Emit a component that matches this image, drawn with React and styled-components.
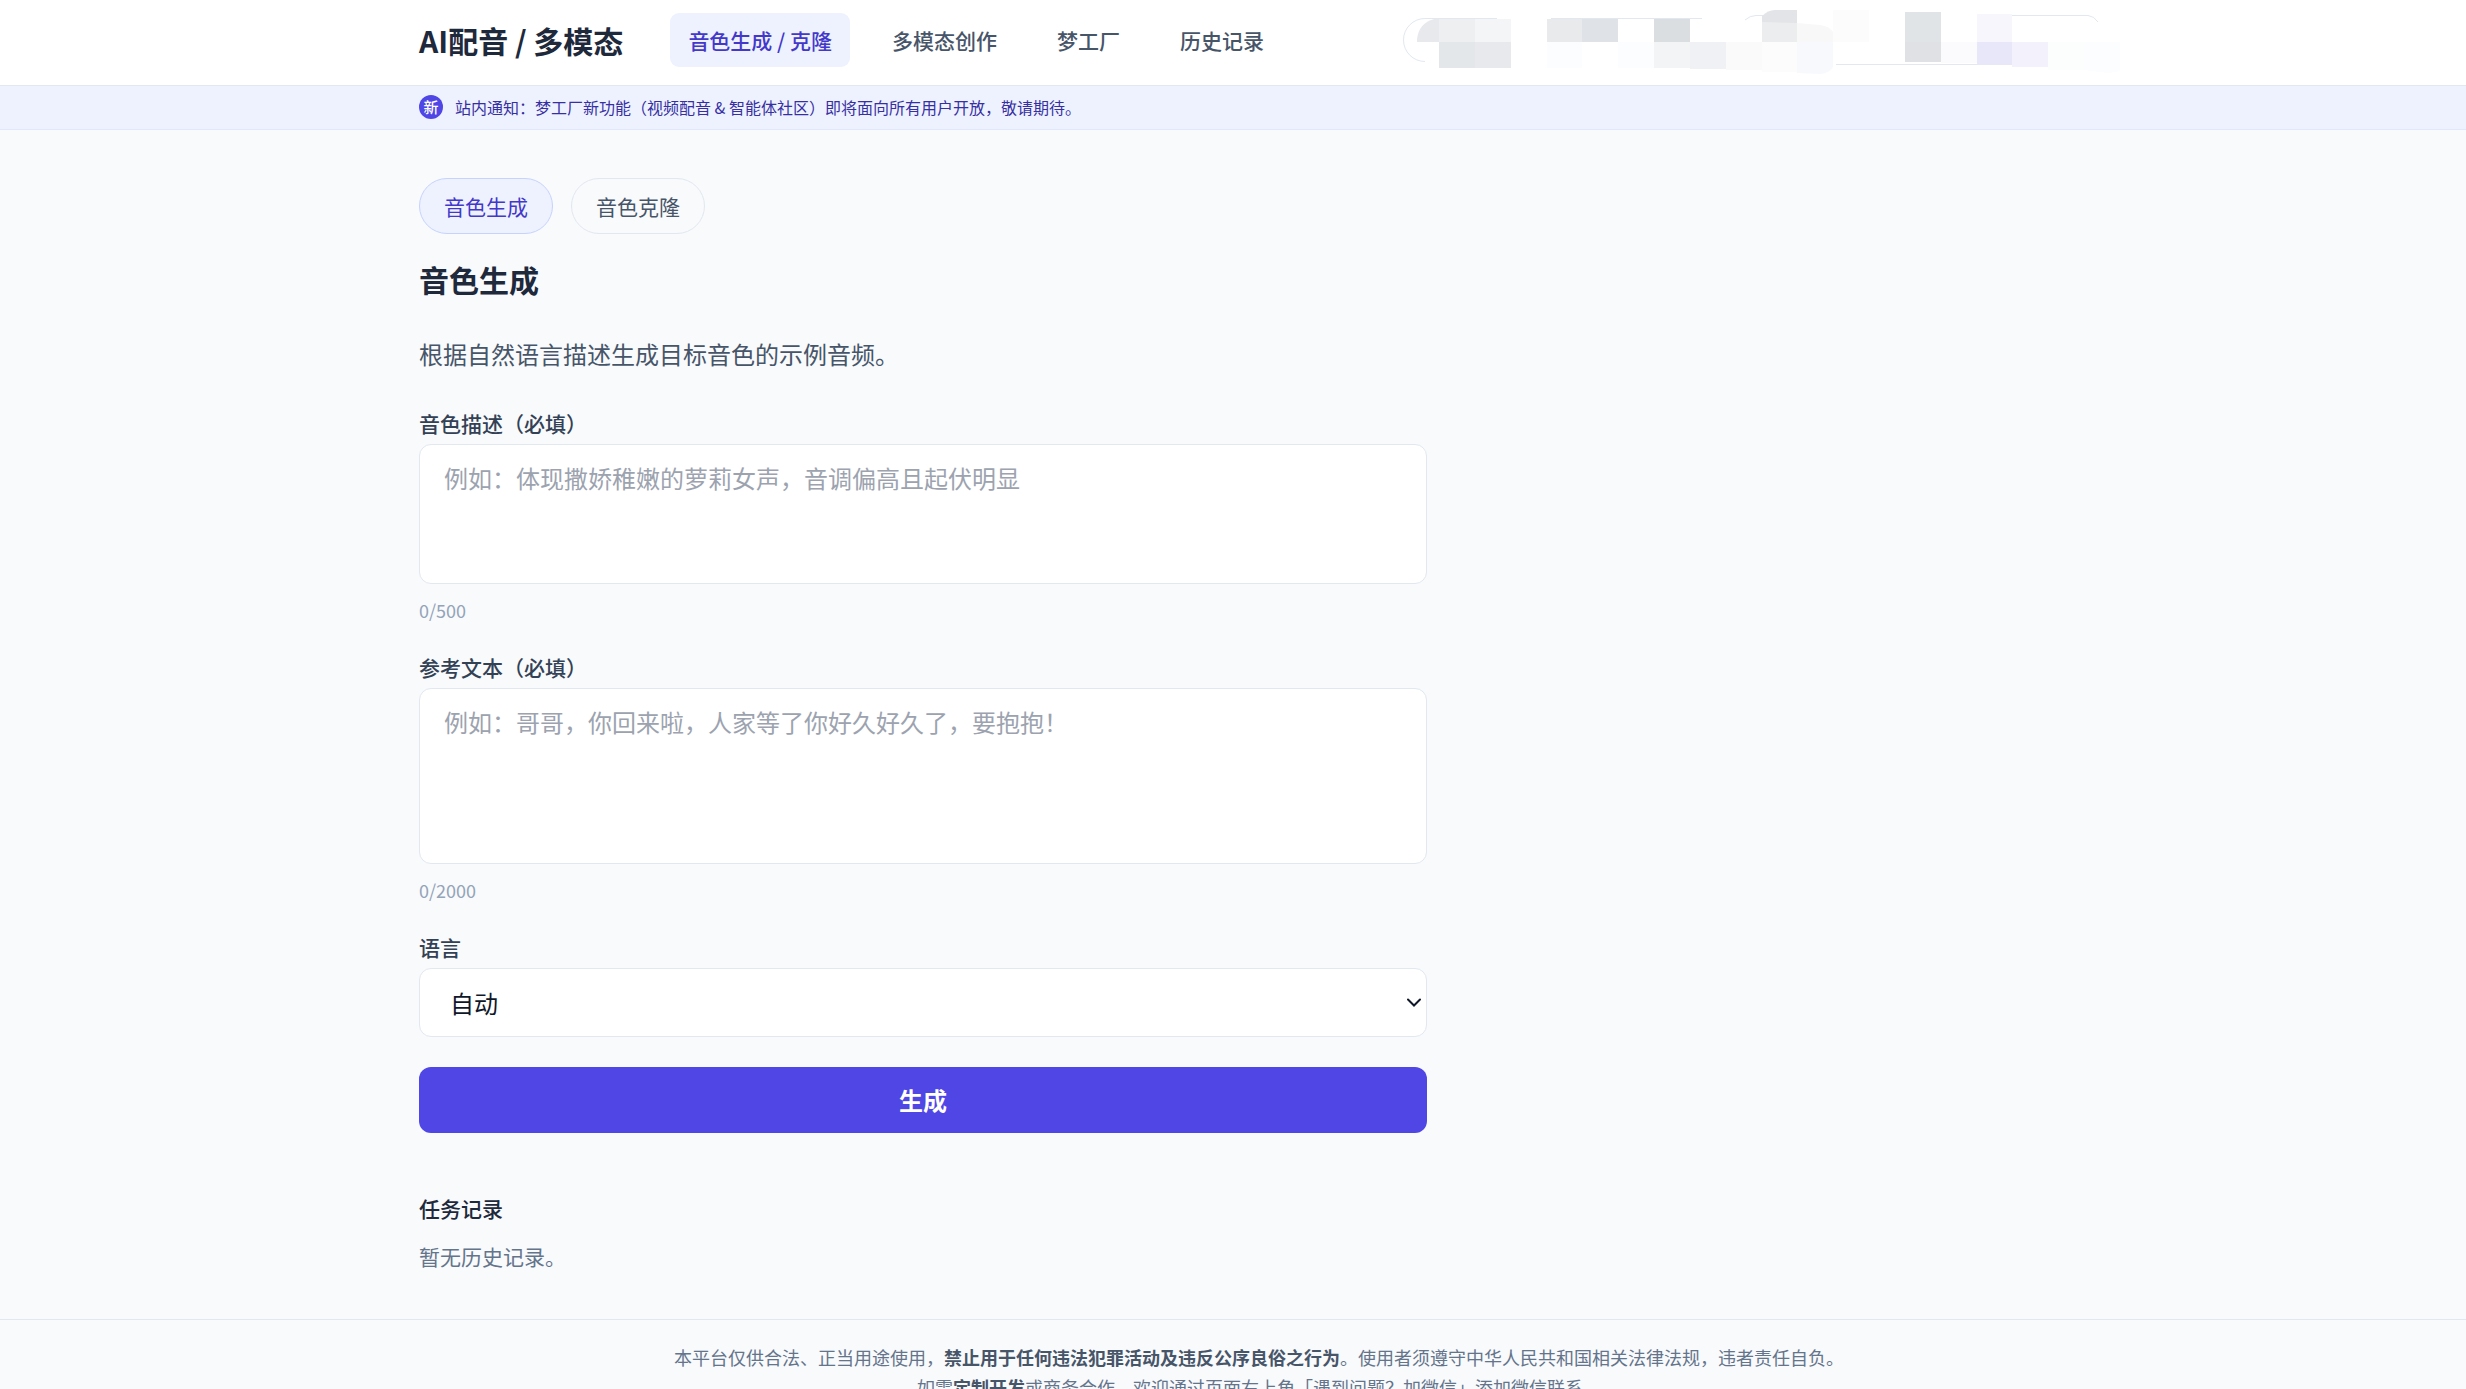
import React, { useState } from "react";
import styled, { createGlobalStyle } from "styled-components";

const navItems = ["音色生成 / 克隆", "多模态创作", "梦工厂", "历史记录"];
const tabs = ["音色生成", "音色克隆"];

// hidden account area, drawn as flat tiles: [x, y, width, height, color]
const tiles = [
  [1439, 19, 36, 23, "#eeeff0"],
  [1475, 19, 36, 23, "#f4f5f7"],
  [1439, 42, 36, 26, "#e3e7e9"],
  [1475, 42, 36, 26, "#e8e9ed"],
  [1547, 19, 35, 23, "#e9eaeb"],
  [1582, 19, 36, 23, "#dfe3e8"],
  [1654, 19, 36, 23, "#dadee1"],
  [1547, 42, 35, 26, "#fbfdff"],
  [1618, 42, 36, 26, "#fbfdff"],
  [1654, 42, 36, 26, "#f3f4f6"],
  [1690, 42, 36, 27, "#f0f1f4"],
  [1726, 42, 36, 28, "#fafafa"],
  [1762, 42, 35, 30, "#fcfcfc"],
  [1762, 22, 35, 20, "#ecedef"],
  [1833, 10, 36, 32, "#fcfcfc"],
  [1905, 12, 36, 30, "#e0e4e6"],
  [1905, 42, 36, 20, "#e0e1e5"],
  [1941, 42, 36, 21, "#fbfbfe"],
  [1977, 14, 35, 28, "#f7f6fd"],
  [1977, 42, 35, 23, "#e8e7fa"],
  [2012, 42, 36, 25, "#f2f1fc"],
  [2048, 42, 36, 28, "#fcfefe"],
];

const AccountMosaic = () => (
  <Mosaic viewBox="1403 13 696 54" aria-hidden="true">
    <g fill="none" stroke="#e2e8f0">
      <path d="M1497 18.5H1425a21.5 21.5 0 0 0 0 43" />
      <path d="M1551 18.5H1702" />
      <path d="M1745 20Q1750 15.5 1756 15.5H1763" />
      <path d="M2008 15.5H2088Q2094 16 2098 22" />
      <path d="M1836 64.5H1984" />
    </g>
    {tiles.map(([x, y, width, height, fill]) => (
      <rect key={`${x}-${y}`} x={x} y={y} width={width} height={height} fill={fill} />
    ))}
    <path d="M1417 42V39Q1419 23 1434 19H1439V42Z" fill="#e8e9ed" />
    <path d="M1762 22V16Q1768 10 1775 10H1797V23Z" fill="#e3e4e8" />
    <path d="M1797 23L1820 25Q1829 26 1833 32V42H1797Z" fill="#f8f8f8" />
    <path d="M1797 42H1833V67Q1828 74 1820 74L1797 73Z" fill="#f8f9fc" />
    <path d="M2084 42H2120V70Q2116 73 2108 73L2084 70Z" fill="#fbfdff" />
  </Mosaic>
);

const App = () => {
  const [activeTab, setActiveTab] = useState(tabs[0]);
  const [form, setForm] = useState({ voice: "", text: "", language: "auto" });

  const handleChange = (event) => {
    setForm({ ...form, [event.target.name]: event.target.value });
  };

  return (
    <>
      <GlobalStyle />
      <Header>
        <HeaderInner>
          <Brand>AI配音 / 多模态</Brand>
          <Nav>
            {navItems.map((item, index) => (
              <NavLink key={item} href="#" $active={index === 0}>
                {item}
              </NavLink>
            ))}
          </Nav>
          <AccountMosaic />
        </HeaderInner>
      </Header>
      <Notice>
        <NoticeInner>
          <Badge>新</Badge>
          站内通知：梦工厂新功能（视频配音 & 智能体社区）即将面向所有用户开放，敬请期待。
        </NoticeInner>
      </Notice>
      <Main>
        <Container>
          <Tabs>
            {tabs.map((tab) => (
              <Tab
                key={tab}
                type="button"
                $active={tab === activeTab}
                onClick={() => setActiveTab(tab)}
              >
                {tab}
              </Tab>
            ))}
          </Tabs>
          <Title>{activeTab}</Title>
          <Intro>根据自然语言描述生成目标音色的示例音频。</Intro>
          <Form onSubmit={(event) => event.preventDefault()}>
            <Field>
              <Label htmlFor="voice">音色描述（必填）</Label>
              <TextArea
                id="voice"
                name="voice"
                rows={3}
                maxLength={500}
                value={form.voice}
                onChange={handleChange}
                placeholder="例如：体现撒娇稚嫩的萝莉女声，音调偏高且起伏明显"
              />
              <Counter>{form.voice.length}/500</Counter>
            </Field>
            <Field>
              <Label htmlFor="text">参考文本（必填）</Label>
              <TextArea
                id="text"
                name="text"
                rows={4}
                maxLength={2000}
                value={form.text}
                onChange={handleChange}
                placeholder="例如：哥哥，你回来啦，人家等了你好久好久了，要抱抱！"
              />
              <Counter>{form.text.length}/2000</Counter>
            </Field>
            <Field>
              <Label htmlFor="language">语言</Label>
              <SelectBox>
                <Select
                  id="language"
                  name="language"
                  value={form.language}
                  onChange={handleChange}
                >
                  <option value="auto">自动</option>
                </Select>
                <Chevron viewBox="0 0 14 9" aria-hidden="true">
                  <path d="M1 1.5l6 6 6-6" />
                </Chevron>
              </SelectBox>
            </Field>
            <Submit type="submit">生成</Submit>
          </Form>
          <HistoryTitle>任务记录</HistoryTitle>
          <Empty>暂无历史记录。</Empty>
        </Container>
      </Main>
      <Footer>
        <p>
          本平台仅供合法、正当用途使用，
          <strong>禁止用于任何违法犯罪活动及违反公序良俗之行为</strong>
          。使用者须遵守中华人民共和国相关法律法规，违者责任自负。
        </p>
        <p>
          如需<strong>定制开发</strong>
          或商务合作，欢迎通过页面右上角「遇到问题？加微信」添加微信联系。
        </p>
      </Footer>
    </>
  );
};

const GlobalStyle = createGlobalStyle`
  * {
    box-sizing: border-box;
  }
  html {
    overflow-x: hidden;
    scrollbar-width: none;
  }
  body {
    margin: 0;
    background: #f8fafc;
    color: #0f172a;
    font-family: "Noto Sans CJK SC", sans-serif;
    font-size: 24px;
    line-height: 36px;
  }
  h1, h2, p {
    margin: 0;
  }
  button, textarea, select {
    font: inherit;
  }
`;

const Container = styled.div`
  max-width: 1728px;
  margin: 0 auto;
  padding: 0 24px;
`;

const Header = styled.header`
  padding: 13px 0 18px 52px;
  background: #fff;
  border-bottom: 1px solid #e2e8f0;
`;

const HeaderInner = styled(Container)`
  display: flex;
  align-items: center;
`;

const Brand = styled.div`
  margin-right: 47px;
  color: #1e293b;
  font-size: 30px;
  font-weight: 600;
  line-height: 42px;
  white-space: nowrap;
`;

const Nav = styled.nav`
  display: flex;
  gap: 24px;
`;

const NavLink = styled.a`
  padding: 12px 18px;
  border-radius: 9px;
  background: ${(props) => (props.$active ? "#eef2ff" : "transparent")};
  color: ${(props) => (props.$active ? "#4338ca" : "#475569")};
  font-size: 21px;
  font-weight: 500;
  line-height: 30px;
  text-decoration: none;
  white-space: nowrap;
`;

const Mosaic = styled.svg`
  width: 696px;
  height: 54px;
  margin-left: auto;
  overflow: visible;
`;

const Notice = styled.div`
  padding: 9px 0 10px 52px;
  background: #eef2ff;
  border-bottom: 1px solid #e0e7ff;
`;

const NoticeInner = styled(Container)`
  display: flex;
  align-items: center;
  gap: 12px;
  color: #3730a3;
  font-size: 16px;
  line-height: 24px;
`;

const Badge = styled.span`
  width: 24px;
  height: 24px;
  border-radius: 50%;
  background: #4f46e5;
  color: #fff;
  font-size: 15px;
  font-weight: 500;
  text-align: center;
`;

const Main = styled.main`
  padding: 48px 0 48px 52px;
`;

const Tabs = styled.div`
  display: flex;
  gap: 18px;
`;

const Tab = styled.button`
  padding: 12px 24px;
  border: 1px solid ${(props) => (props.$active ? "#c7d2fe" : "#e2e8f0")};
  border-radius: 28px;
  background: ${(props) => (props.$active ? "#eef2ff" : "transparent")};
  color: ${(props) => (props.$active ? "#4338ca" : "#475569")};
  font-size: 21px;
  line-height: 30px;
  cursor: pointer;
`;

const Title = styled.h1`
  margin-top: 24px;
  color: #1e293b;
  font-size: 30px;
  font-weight: 600;
  line-height: 42px;
`;

const Intro = styled.p`
  margin-top: 36px;
  color: #475569;
`;

const Form = styled.form`
  display: flex;
  flex-direction: column;
  gap: 30px;
  max-width: 1008px;
  margin-top: 36px;
`;

const Field = styled.div`
  display: flex;
  flex-direction: column;
`;

const Label = styled.label`
  margin-bottom: 6px;
  color: #334155;
  font-size: 21px;
  font-weight: 500;
  line-height: 30px;
`;

const TextArea = styled.textarea`
  padding: 15px 24px;
  border: 1px solid #e2e8f0;
  border-radius: 12px;
  background: #fff;
  color: #0f172a;
  resize: none;

  &::placeholder {
    color: #9ca3af;
  }
`;

const Counter = styled.p`
  margin-top: 14px;
  color: #94a3b8;
  font-size: 18px;
  line-height: 24px;
`;

const SelectBox = styled.div`
  display: grid;
  align-items: center;

  & > * {
    grid-area: 1 / 1;
  }
`;

const Select = styled.select`
  width: 100%;
  height: 69px;
  padding: 0 30px;
  border: 1px solid #e2e8f0;
  border-radius: 12px;
  background: #fff;
  color: #0f172a;
  appearance: none;
`;

const Chevron = styled.svg`
  width: 14px;
  height: 9px;
  margin-right: 6px;
  justify-self: end;
  fill: none;
  stroke: #0f172a;
  stroke-width: 2;
  stroke-linecap: round;
  pointer-events: none;
`;

const Submit = styled.button`
  padding: 15px;
  border: none;
  border-radius: 12px;
  background: #4f46e5;
  color: #fff;
  font-weight: 600;
  cursor: pointer;
`;

const HistoryTitle = styled.h2`
  margin-top: 60px;
  color: #1e293b;
  font-size: 21px;
  font-weight: 500;
  line-height: 30px;
`;

const Empty = styled.p`
  margin-top: 18px;
  color: #64748b;
  font-size: 21px;
  line-height: 30px;
`;

const Footer = styled.footer`
  padding: 22px 0 24px 52px;
  border-top: 1px solid #e2e8f0;
  color: #64748b;
  font-size: 18px;
  line-height: 30px;
  text-align: center;

  strong {
    color: #475569;
  }
`;

export default App;
